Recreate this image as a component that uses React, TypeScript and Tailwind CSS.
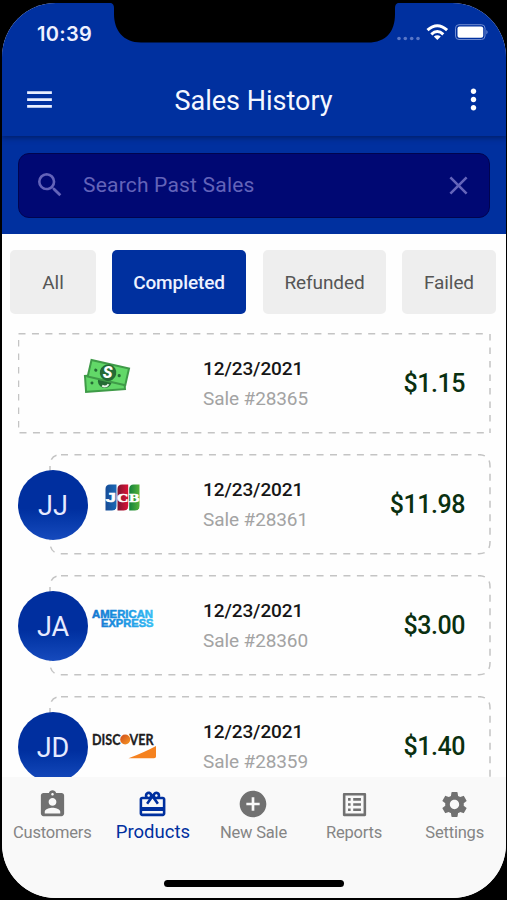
import React from "react";
import {
  MdAddCircle,
  MdAssignmentInd,
  MdCardGiftcard,
  MdClose,
  MdListAlt,
  MdMenu,
  MdMoreVert,
  MdSearch,
  MdSettings,
} from "react-icons/md";

function StatusBar() {
  return (
    <div className="relative flex h-[62px] shrink-0 items-start justify-between">
      <span className="ml-[35px] mt-[19px] font-['Inter'] text-[20px] font-semibold leading-[24px] tracking-[0.3px] text-[#eef1ff]">
        10:39
      </span>
      <svg
        className="absolute left-[104px] top-[-3px]"
        width="298"
        height="43"
        viewBox="106 0 298 43"
      >
        <path
          d="M106 0V2.5H109Q114 3 114 8V14C114 30 123 42.5 141 42.5H368C386 42.5 395 32 395 14V8Q395 3 400 2.5H404V0Z"
          fill="#000"
        />
      </svg>
      <svg className="mr-[16px] mt-[17px]" width="94" height="24" viewBox="396 20 94 24">
        <g fill="#5876c6">
          <circle cx="399" cy="38.5" r="1.8" />
          <circle cx="405.3" cy="38.5" r="1.8" />
          <circle cx="411.7" cy="38.5" r="1.8" />
          <circle cx="418" cy="38.5" r="1.8" />
        </g>
        <g fill="none" stroke="#fff" strokeWidth="3">
          <path d="M427.5 30.2Q437.3 21.2 447.1 30.2" />
          <path d="M431.3 34.3Q437.3 28.8 443.3 34.3" />
        </g>
        <path d="M433.8 36.5Q437.3 33.8 440.8 36.5L437.3 40Z" fill="#fff" />
        <rect x="455.5" y="24.7" width="29.5" height="14.8" rx="3.5" fill="none" stroke="#6f8bd1" strokeWidth="1" />
        <rect x="457.5" y="26.5" width="25.7" height="11.2" rx="2" fill="#fff" />
        <path d="M486.5 30Q488.5 32 486.5 34.5Z" fill="#8ba3de" />
      </svg>
    </div>
  );
}

function Cash() {
  return (
    <svg className="ml-[64px] mt-[24px]" width="50" height="39" viewBox="82 358 50 39">
      <g transform="rotate(-4 105 384)">
        <rect x="84.500" y="374.500" width="41" height="18" fill="#3f9b48" />
        <rect x="86.500" y="376.500" width="37" height="14" fill="#62d868" />
        <circle cx="105" cy="382" r="7" fill="#256b35" />
        <path d="M102 386.500Q105.500 389 108.500 385.500" fill="none" stroke="#e9f7ea" strokeWidth="2" />
        <circle cx="92" cy="383" r="1.500" fill="#256b35" />
      </g>
      <g transform="rotate(13 108 374)">
        <rect x="88" y="364" width="40.500" height="19" fill="#3f9b48" />
        <rect x="90" y="366" width="36.500" height="15" fill="#62d868" />
        <circle cx="108" cy="373.700" r="8.300" fill="#256b35" />
        <circle cx="95.500" cy="374" r="1.600" fill="#256b35" />
        <circle cx="119.500" cy="374" r="1.600" fill="#256b35" />
      </g>
      <text x="107.700" y="379.300" textAnchor="middle" fontFamily="Roboto" fontSize="16" fontWeight="900" fontStyle="italic" fill="#fff">
        S
      </text>
    </svg>
  );
}

function Jcb() {
  return (
    <svg className="ml-[16px] mt-[29px]" width="36" height="30" viewBox="104 483 36 30">
      <defs>
        <linearGradient id="jb"><stop stopColor="#164b96" /><stop offset="1" stopColor="#1a69b5" /></linearGradient>
        <linearGradient id="jr"><stop stopColor="#7e1530" /><stop offset="1" stopColor="#dc1337" /></linearGradient>
        <linearGradient id="jg"><stop stopColor="#12813c" /><stop offset="1" stopColor="#55b23a" /></linearGradient>
      </defs>
      <path d="M105.500 489Q105.500 484.500 110 484.500H116.500V506Q116.500 510.500 112 510.500H105.500Z" fill="url(#jb)" />
      <path d="M117.500 489Q117.500 484.500 122 484.500H128.200V506Q128.200 510.500 123.700 510.500H117.500Z" fill="url(#jr)" />
      <path d="M129.200 489Q129.200 484.500 133.700 484.500H139.500V506Q139.500 510.500 135 510.500H129.200Z" fill="url(#jg)" />
      <g fontFamily="Liberation Serif" fontSize="13" fontWeight="700" fill="#fff" stroke="#fff" strokeWidth=".5">
        <text x="105.500" y="501.500" textLength="10.500" lengthAdjust="spacingAndGlyphs" fontFamily="Liberation Sans">J</text>
        <text x="117" y="501.500" textLength="11.500" lengthAdjust="spacingAndGlyphs">C</text>
        <text x="129" y="501.500" textLength="10.500" lengthAdjust="spacingAndGlyphs">B</text>
      </g>
    </svg>
  );
}

function Amex() {
  return (
    <svg className="ml-[3px] mt-[33px]" width="64" height="22" viewBox="91 608 64 22">
      <defs>
        <linearGradient id="ax" gradientUnits="userSpaceOnUse" x1="92" y1="0" x2="154" y2="0">
          <stop stopColor="#1475cf" />
          <stop offset=".5" stopColor="#1c93e2" />
          <stop offset="1" stopColor="#35bdf4" />
        </linearGradient>
      </defs>
      <g fontFamily="Liberation Sans" fontWeight="700" fontSize="10" fill="url(#ax)" stroke="url(#ax)" strokeWidth=".5">
        <text x="92" y="617.500" textLength="61" lengthAdjust="spacingAndGlyphs">AMERICAN</text>
        <text x="101" y="627" textLength="52.500" lengthAdjust="spacingAndGlyphs">EXPRESS</text>
      </g>
    </svg>
  );
}

function Discover() {
  return (
    <svg className="ml-[3px] mt-[35px]" width="68" height="30" viewBox="91 731 68 30">
      <defs>
        <linearGradient id="dc" x1="0" y1="0" x2="1" y2="1">
          <stop stopColor="#cf4b1c" />
          <stop offset="1" stopColor="#f89a24" />
        </linearGradient>
      </defs>
      <g fontFamily="Lato" fontSize="14.500" fontWeight="700" fill="#211d1f" stroke="#211d1f" strokeWidth=".3">
        <text x="92" y="744.800" textLength="28.500" lengthAdjust="spacingAndGlyphs">DISC</text>
        <text x="129.500" y="744.800" textLength="24" lengthAdjust="spacingAndGlyphs">VER</text>
      </g>
      <circle cx="125.200" cy="739.500" r="5" fill="url(#dc)" />
      <path d="M128.500 758.300Q144 752.500 156 746V756.500Q156 758.300 154 758.300Z" fill="#f58220" />
    </svg>
  );
}

type Sale = {
  initials?: string;
  logo: React.ReactNode;
  id: string;
  amount: string;
};

const sales: Sale[] = [
  { logo: <Cash />, id: "28365", amount: "$1.15" },
  { initials: "JJ", logo: <Jcb />, id: "28361", amount: "$11.98" },
  { initials: "JA", logo: <Amex />, id: "28360", amount: "$3.00" },
  { initials: "JD", logo: <Discover />, id: "28359", amount: "$1.40" },
];

function SaleRow({ initials, logo, id, amount }: Sale) {
  return (
    <div className="relative flex h-[100px] shrink-0">
      <svg className="absolute inset-0" width="473" height="101" viewBox="0 0 473 101" fill="none" stroke="#c4c4c4" strokeWidth="1.5">
        {initials ? (
          <path
            d="M43 .7H461Q472 .7 472 12V88Q472 99.700 461 99.700H43Q32 99.700 32 88V12Q32 .7 43 .7"
            strokeDasharray="7 6.450"
          />
        ) : (
          <>
            <path d="M.5 .7H471M1.500 99.700H471" strokeDasharray="7 6.450" />
            <path d="M.5 7V97M472 1V100" strokeDasharray="6.500 7" />
          </>
        )}
      </svg>
      <div className="relative flex w-[185px] shrink-0 items-start">
        {initials && (
          <div className="mt-[16px] flex size-[70px] shrink-0 items-center justify-center rounded-full bg-linear-to-b from-[#002f9f] from-55% to-[#164abd] pt-[3px] text-[27px] text-[#e6ebff]">
            {initials}
          </div>
        )}
        {logo}
      </div>
      <div className="relative flex flex-1 justify-between">
        <div className="pt-[22px]">
          <div className="text-[19px] font-medium leading-[28px] tracking-[-0.1px] text-[#161616]">12/23/2021</div>
          <div className="text-[19px] leading-[31px] tracking-[-0.1px] text-[#a3a3a3]">Sale #{id}</div>
        </div>
        <div className="mr-[26px] pt-[35px] text-[25px] font-medium leading-[32px] tracking-[-0.45px] text-[#0a3010]">{amount}</div>
      </div>
    </div>
  );
}

function Tab({ icon, label, active }: { icon: React.ReactNode; label: string; active?: boolean }) {
  return (
    <div className={`flex flex-1 flex-col items-center pt-[11px] ${active ? "text-[#00309f]" : "text-[#717171]"}`}>
      <span className="flex h-[32px] items-center">{icon}</span>
      <span
        className={
          active
            ? "whitespace-nowrap pt-[1px] text-[18.500px] leading-[22px]"
            : "whitespace-nowrap pt-[2px] text-[16.500px] leading-[22px] tracking-[-0.2px] text-[#858585]"
        }
      >
        {label}
      </span>
    </div>
  );
}

export default function App() {
  return (
    <div className="flex h-[900px] w-[507px] bg-black pl-[2px] pt-[3px] font-['Roboto',sans-serif]">
      <div className="flex h-[895px] w-[504px] flex-col overflow-hidden rounded-[54px] bg-[#fefefe]">
        <header className="relative z-10 shrink-0 bg-[#00309f] shadow-[0_2px_5px_rgba(0,20,70,0.6)]">
          <StatusBar />
          <div className="flex h-[71px] items-center justify-between pb-[3px] pl-[21px] pr-[16px]">
            <MdMenu size={33} color="#e9eeff" />
            <h1 className="relative right-[3px] pt-[3px] text-[27px] leading-[32px] text-[#f5f7ff]">Sales History</h1>
            <MdMoreVert size={33} color="#fff" />
          </div>
        </header>

        <div className="flex h-[98px] shrink-0 items-start bg-[#00309f] px-[16px] pt-[17px]">
          <div className="flex h-[65px] w-full items-center rounded-[11px] border border-[#00044f] bg-[#000873] px-[15px] pb-[1px] text-[#6363b9]">
            <MdSearch size={32} />
            <span className="ml-[17px] flex-1 text-[21px] leading-[26px] tracking-[0.2px]">Search Past Sales</span>
            <MdClose size={31} />
          </div>
        </div>

        <div className="flex shrink-0 pl-[8px] pt-[16px] text-[19px] tracking-[-0.1px] text-[#555]">
          <div className="flex h-[64px] w-[86px] items-center justify-center rounded-[5px] bg-[#eeeeee] pt-[2px]">All</div>
          <div className="ml-[16px] flex h-[64px] w-[134px] items-center justify-center rounded-[5px] bg-[#00309f] pt-[2px] font-medium text-[#eef2ff]">
            Completed
          </div>
          <div className="ml-[17px] flex h-[64px] w-[123px] items-center justify-center rounded-[5px] bg-[#eeeeee] pt-[2px]">Refunded</div>
          <div className="ml-[16px] flex h-[64px] w-[94px] items-center justify-center rounded-[5px] bg-[#eeeeee] pt-[2px]">Failed</div>
        </div>

        <main className="flex min-h-0 flex-1 flex-col gap-[21px] overflow-hidden pl-[16px] pr-[15px] pt-[19px]">
          {sales.map((s) => (
            <SaleRow key={s.id} {...s} />
          ))}
        </main>

        <nav className="flex h-[100px] shrink-0 bg-[#f9f9f9] pr-[1px]">
          <Tab icon={<MdAssignmentInd size={31} />} label="Customers" />
          <Tab icon={<MdCardGiftcard size={31} />} label="Products" active />
          <Tab icon={<MdAddCircle size={32} />} label="New Sale" />
          <Tab icon={<MdListAlt size={31} />} label="Reports" />
          <Tab icon={<MdSettings size={31} />} label="Settings" />
        </nav>
        <div className="flex h-[21px] shrink-0 justify-center bg-[#f9f9f9]">
          <div className="mt-[3px] h-[7px] w-[180px] rounded-full bg-black" />
        </div>
      </div>
    </div>
  );
}
